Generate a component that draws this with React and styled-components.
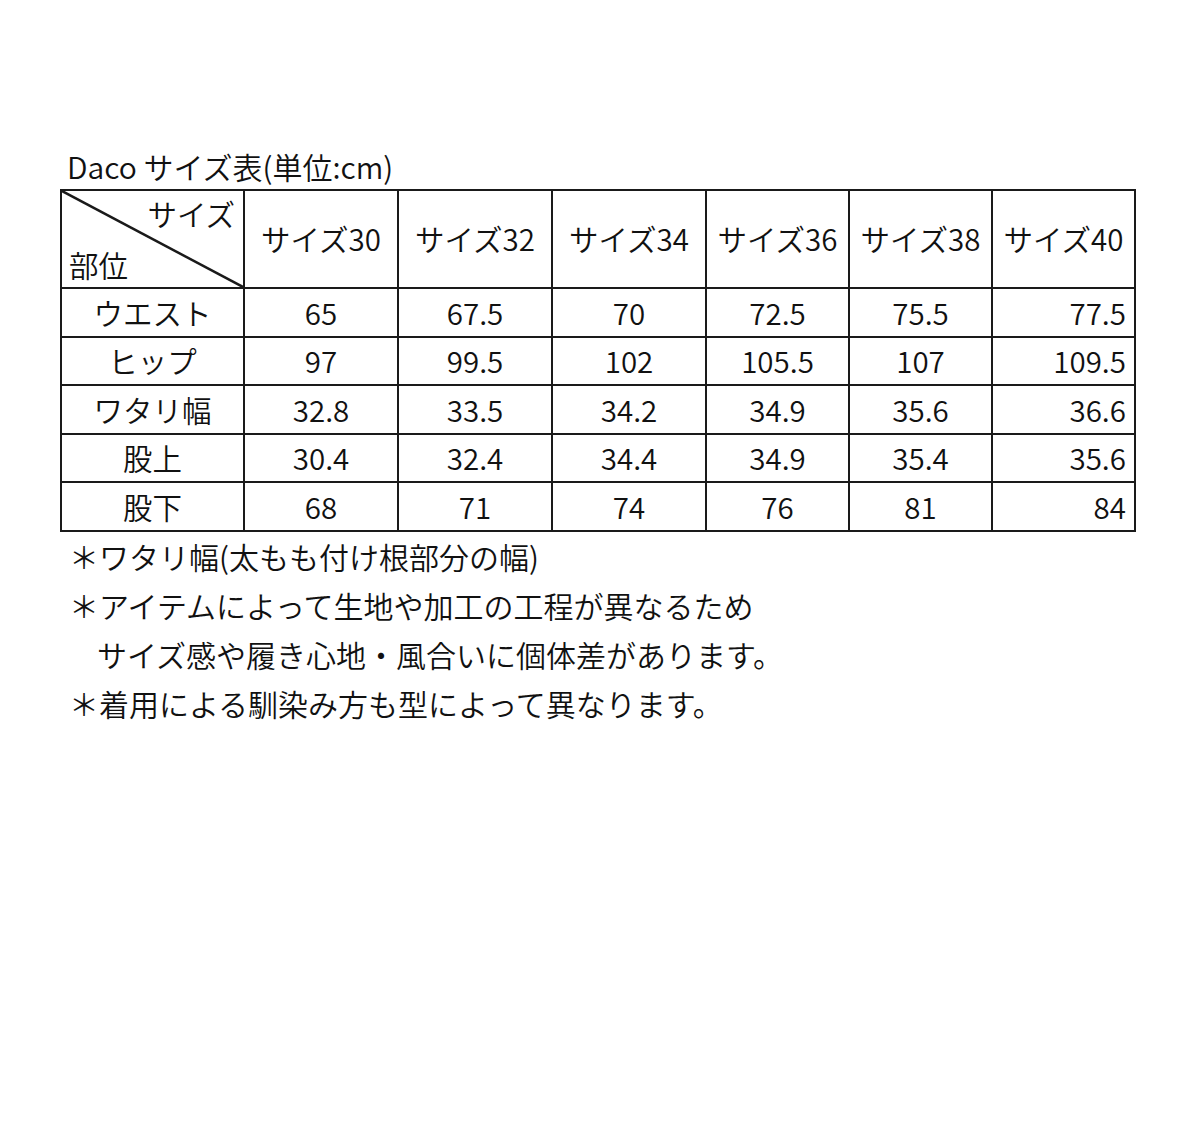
import React from "react";
import styled, { createGlobalStyle } from "styled-components";

const GlobalStyle = createGlobalStyle`
  html, body {
    margin: 0;
    padding: 0;
    background: #ffffff;
  }
  body {
    font-family: "Noto Sans CJK JP", "Noto Sans", sans-serif;
    font-weight: 350;
    color: #111111;
  }
`;

const Page = styled.div`
  width: 1200px;
  height: 1123px;
  padding: 147px 0 0 60px;
  box-sizing: border-box;
`;

const Title = styled.h1`
  margin: 0 0 4px 7px;
  font-size: 30px;
  font-weight: 350;
  line-height: 38px;
`;

const Table = styled.table`
  border-collapse: collapse;
  table-layout: fixed;
  width: 1076px;
  font-size: 29.5px;
`;

const Cell = styled.td`
  border: 2.5px solid #1a1a1a;
  padding: 0 ${(p) => (p.$right ? "8px" : "0")} 0 0;
  text-align: ${(p) => (p.$right ? "right" : "center")};
  vertical-align: middle;
  white-space: nowrap;
  font-weight: 350;
  line-height: 1;
`;

const HeadRow = styled.tr`
  height: 96px;
`;

const Row = styled.tr`
  height: 48.6px;
`;

const Corner = styled.td`
  position: relative;
  border: 2.5px solid #1a1a1a;
  padding: 0;
`;

const Diagonal = styled.svg`
  position: absolute;
  inset: 0;
  width: 100%;
  height: 100%;
`;

const CornerInner = styled.div`
  position: relative;
  height: 96px;
  display: flex;
  flex-direction: column;
  justify-content: space-between;
  padding: 5px 8px 5px 7px;
  box-sizing: border-box;
  line-height: 1.2;
`;

const CornerTop = styled.span`
  align-self: flex-end;
`;

const CornerBottom = styled.span`
  align-self: flex-start;
`;

const Notes = styled.div`
  margin: 0 0 0 9px;
  font-size: 30px;
  line-height: 49px;
`;

const Note = styled.div`
  padding-left: ${(p) => (p.$indent ? "28px" : "0")};
`;

const sizes = ["30", "32", "34", "36", "38", "40"];
const widths = [183, 154, 154, 154, 143, 143, 143];

const rows = [
  ["ウエスト", "65", "67.5", "70", "72.5", "75.5", "77.5"],
  ["ヒップ", "97", "99.5", "102", "105.5", "107", "109.5"],
  ["ワタリ幅", "32.8", "33.5", "34.2", "34.9", "35.6", "36.6"],
  ["股上", "30.4", "32.4", "34.4", "34.9", "35.4", "35.6"],
  ["股下", "68", "71", "74", "76", "81", "84"],
];

export default function App() {
  return (
    <>
      <GlobalStyle />
      <Page>
        <Title>Daco サイズ表(単位:cm)</Title>
        <Table>
          <colgroup>
            {widths.map((w, i) => (
              <col key={i} style={{ width: w }} />
            ))}
          </colgroup>
          <thead>
            <HeadRow>
              <Corner>
                <Diagonal viewBox="0 0 100 100" preserveAspectRatio="none">
                  <line
                    x1="0"
                    y1="0"
                    x2="100"
                    y2="100"
                    stroke="#1a1a1a"
                    strokeWidth="2.5"
                    vectorEffect="non-scaling-stroke"
                  />
                </Diagonal>
                <CornerInner>
                  <CornerTop>サイズ</CornerTop>
                  <CornerBottom>部位</CornerBottom>
                </CornerInner>
              </Corner>
              {sizes.map((s) => (
                <Cell as="th" key={s}>
                  サイズ{s}
                </Cell>
              ))}
            </HeadRow>
          </thead>
          <tbody>
            {rows.map((r) => (
              <Row key={r[0]}>
                {r.map((v, i) => (
                  <Cell key={i} $right={i === r.length - 1}>
                    {v}
                  </Cell>
                ))}
              </Row>
            ))}
          </tbody>
        </Table>
        <Notes>
          <Note>＊ワタリ幅(太もも付け根部分の幅)</Note>
          <Note>＊アイテムによって生地や加工の工程が異なるため</Note>
          <Note $indent>サイズ感や履き心地・風合いに個体差があります。</Note>
          <Note>＊着用による馴染み方も型によって異なります。</Note>
        </Notes>
      </Page>
    </>
  );
}
